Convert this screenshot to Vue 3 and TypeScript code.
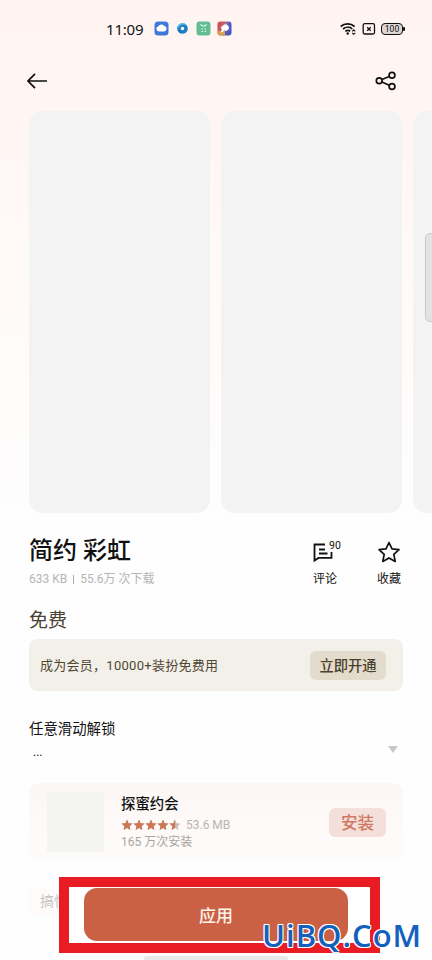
<script setup lang="ts">
const stars: number[] = [1, 1, 1, 1, 0.5]
const starPath = 'M6 .6 7.6 4.2 11.5 4.6 8.6 7.2 9.4 11.1 6 9.1 2.6 11.1 3.4 7.2.5 4.6 4.4 4.2Z'
</script>

<template>
  <div class="screen">
    <header class="status">
      <span class="clock">11:09</span>
      <div class="apps">
        <svg width="15" height="15" viewBox="0 0 15 15"><rect x=".5" y=".5" width="14" height="14" rx="3.5" fill="#3f78db" /><path d="M4.800 10.500a2.700 2.700 0 0 1-.4-5.300 3.500 3.500 0 0 1 5.800-.3 2.900 2.900 0 0 1 .4 5.600Z" fill="#fff" /></svg>
        <svg width="15" height="15" viewBox="0 0 15 15"><circle cx="7.500" cy="7.500" r="5.300" fill="#1c7fc4" /><path d="M3 6.300a5 5 0 0 1 7-3" fill="none" stroke="#52c5ec" stroke-width="1.600" /><circle cx="7.500" cy="7.500" r="1.700" fill="#fff" /></svg>
        <svg width="15" height="15" viewBox="0 0 15 15"><rect x=".5" y=".5" width="14" height="14" rx="3" fill="#62bd93" /><path d="M4.500 3.500 6.500 5h2l2-1.500M5.500 8h1.500M8.500 8H10M5.500 10.500h1.500M8.500 10.500H10" fill="none" stroke="#e5fff1" stroke-width="1.100" /></svg>
        <svg width="15" height="15" viewBox="0 0 15 15"><defs><linearGradient id="tile" x1="0" y1=".3" x2="1" y2=".7"><stop offset="0" stop-color="#d84849" /><stop offset=".45" stop-color="#b96c88" /><stop offset=".65" stop-color="#525dc4" /><stop offset="1" stop-color="#4356c2" /></linearGradient></defs><rect x=".5" y=".5" width="14" height="14" rx="3" fill="url(#tile)" /><path d="M.5 10H8v4.500H3.500a3 3 0 0 1-3-3Z" fill="#d8a150" /><path d="M7.500 4a3 3 0 0 1 3.500 4.500L9 9.500 7.500 9 4.500 11 5.200 8.500 4.500 6Z" fill="#fff" stroke="#fff" stroke-linejoin="round" /></svg>
      </div>
      <div class="signals">
        <svg width="17" height="14" viewBox="0 0 17 14" fill="none" stroke="#111" stroke-width="1.700"><path d="M.7 4.500a10.500 10.500 0 0 1 13.900 0M3 7a7.300 7.300 0 0 1 9.300-.2M5.300 9.300a4 4 0 0 1 4.900-.1" /><circle cx="7.700" cy="11.500" r="1.200" fill="#111" stroke="none" /><path d="m12.200 9.300 1.500-1.500 1.500 1.500m-3 1.500 1.500 1.500 1.500-1.500" stroke-width="1.100" /></svg>
        <svg width="14" height="14" viewBox="0 0 14 14" fill="none" stroke="#111" stroke-width="1.300"><rect x="1.200" y="1.700" width="11.300" height="10.300" rx="1.500" /><path d="m5.200 5.200 3.500 3.500m0-3.500L5.200 8.700" /></svg>
        <div class="battery">100</div>
      </div>
    </header>

    <nav class="nav">
      <svg width="22" height="18" viewBox="0 0 22 18" fill="none" stroke="#111" stroke-width="1.700"><path d="M20 9H1.500M8 1.800 1 9l7 7.200" /></svg>
      <svg width="22" height="20" viewBox="0 0 22 20" fill="none" stroke="#111" stroke-width="1.700"><circle cx="4.200" cy="9.800" r="2.900" /><circle cx="17" cy="4.300" r="2.900" /><circle cx="17" cy="15.500" r="2.900" /><path d="m7 8.500 7.200-3M7 11l7.200 3.200" /></svg>
    </nav>

    <div class="gallery"><div class="shot" /><div class="shot" /><div class="shot" /></div>
    <div class="drawer" />

    <section class="heading">
      <div>
        <h1>简约 彩虹</h1>
        <p class="meta">633 KB<i />55.6万 次下载</p>
      </div>
      <div class="actions">
        <div class="action">
          <svg width="30" height="24" viewBox="0 0 30 24" fill="none" stroke="#111" stroke-width="1.800"><path d="M15 3.500H4.500v16l4-2.600H21.500v-6M9 8.500h6M9 12.500h8.500" /></svg>
          <sup>90</sup><span>评论</span>
        </div>
        <div class="action">
          <svg width="24" height="24" viewBox="0 0 24 24" fill="none" stroke="#111" stroke-width="1.700" stroke-linejoin="round"><path d="m12 1.500 3 6.400 7 .8-5.200 4.700 1.400 7-6.200-3.500-6.200 3.500 1.400-7L2 8.700l7-.8Z" /></svg>
          <span>收藏</span>
        </div>
      </div>
    </section>

    <div class="price">免费</div>
    <section class="member"><span>成为会员，10000+装扮免费用</span><button>立即开通</button></section>

    <section class="description">
      <p>任意滑动解锁</p>
      <div class="more"><span>...</span><i /></div>
    </section>

    <section class="app">
      <div class="thumb" />
      <div class="info">
        <strong>探蜜约会</strong>
        <div class="rating">
          <svg v-for="(fill, i) in stars" :key="i" width="12" height="12" viewBox="0 0 12 12"><path :d="starPath" fill="#cdbbb4" /><path v-if="fill === 1" :d="starPath" fill="#cd7657" /><path v-else d="M6 .6V9.100L2.600 11.100 3.400 7.200.5 4.600 4.400 4.200Z" fill="#cd7657" /></svg>
          <span>53.6 MB</span>
        </div>
        <small>165 万次安装</small>
      </div>
      <button>安装</button>
    </section>
    <div class="tag">搞怪</div>

    <div class="highlight"><button>应用</button></div>
    <div class="home" />
    <div class="watermark">UiBQ.CoM</div>
  </div>
</template>

<style>
body { margin: 0; }
</style>

<style scoped>
.screen { position: relative; box-sizing: border-box; width: 432px; height: 960px; overflow: hidden; background: linear-gradient(#fff4f2 0, #fff5f3 90px, #fffaf8 280px, #fefefe 550px); color: #111; font-family: Roboto, "Noto Sans CJK SC", sans-serif; }
button { display: flex; align-items: center; justify-content: center; padding: 0; border: 0; font-family: inherit; white-space: nowrap; }
p, h1 { margin: 0; }
svg { display: block; flex: none; }
.status { display: flex; align-items: center; box-sizing: border-box; height: 58px; padding: 0 27px 1px 106px; }
.clock { width: 48px; font: 15px/20px "Noto Sans", sans-serif; letter-spacing: -.2px; }
.apps { display: flex; gap: 6px; }
.signals { display: flex; gap: 5px; margin-left: auto; align-items: center; }
.battery { position: relative; box-sizing: border-box; width: 22px; height: 12px; margin-right: 2px; border: 1.500px solid #111; border-radius: 4px; background: #ddd6d4; font: 8.500px/10px Roboto, sans-serif; text-align: center; }
.battery::after { position: absolute; top: 3px; right: -3px; width: 2px; height: 4px; border-radius: 1px; background: #111; content: ""; }
.nav { display: flex; justify-content: space-between; align-items: center; height: 45px; margin-bottom: 8px; padding: 0 35px 0 27px; }
.gallery { display: flex; gap: 11px; margin-left: 29px; height: 402px; }
.shot { flex: 0 0 181px; border-radius: 14px; background: #f3f3f3; }
.drawer { position: absolute; top: 233px; left: 425px; box-sizing: border-box; width: 12px; height: 89px; border: 1px solid #c9c9c9; border-radius: 5px; background: #e3e3e3; }
.heading { display: flex; justify-content: space-between; height: 90px; padding: 20px 28px 0 29px; box-sizing: border-box; }
h1 { font-size: 24px; line-height: 36px; font-weight: 500; letter-spacing: 0; }
.meta { display: flex; align-items: center; color: #b5b5b5; font-size: 12px; line-height: 20px; white-space: nowrap; }
.meta i { width: 1px; height: 9px; margin: 0 6px; background: #aaa; }
.actions { display: flex; gap: 34px; padding-top: 8px; }
.action { position: relative; display: flex; flex-direction: column; align-items: center; width: 30px; }
.action span { margin-top: 5px; font-size: 12px; line-height: 18px; }
.action sup { position: absolute; top: -1px; left: 19px; font-size: 10.500px; line-height: 12px; }
.price { box-sizing: border-box; height: 36px; padding: 2px 0 0 29px; color: #4b4335; font-size: 19px; line-height: 32px; }
.member { display: flex; justify-content: space-between; align-items: center; box-sizing: border-box; width: 374px; height: 52px; margin-left: 29px; padding: 0 17px 0 11px; border-radius: 8px; background: #f3f0e9; color: #504733; font-size: 13px; }
.member span { padding-bottom: 1px; letter-spacing: .27px; }
.member button { width: 76px; height: 29px; padding-bottom: 1px; box-sizing: border-box; border-radius: 6px; background: #e3dccd; color: #4b402b; font-size: 14.300px; font-weight: 500; }
.description { height: 92px; padding: 28px 34px 0 29px; box-sizing: border-box; font-size: 14.400px; line-height: 22px; }
.more { display: flex; justify-content: space-between; padding-left: 4px; font-size: 12px; line-height: 22px; letter-spacing: 0; }
.more i { width: 10px; height: 7px; margin-top: 5px; background: #c8c8c8; clip-path: polygon(0 0, 100% 0, 50% 100%); }
.app { display: flex; align-items: center; box-sizing: border-box; width: 374px; height: 78px; margin-left: 29px; padding: 0 17px 0 18px; border-radius: 10px; background: linear-gradient(#fcf7f5, #fefcfb); }
.thumb { width: 57px; height: 60px; margin-right: 17px; background: #f4f4f3; }
.info { display: flex; flex: 1; flex-direction: column; padding-top: 1px; }
.info strong { font-size: 14.400px; line-height: 22px; font-weight: 500; }
.rating { display: flex; align-items: center; height: 17px; }
.rating span { margin-left: 5px; color: #b8b3b0; font-size: 12px; }
small { color: #aaa5a2; font-size: 12px; line-height: 18px; }
.app button { width: 57px; height: 29px; border-radius: 6px; background: #f5dfda; color: #cf7962; font-size: 16.500px; font-weight: 500; }
.tag { width: 58px; height: 28px; margin: 26px 0 0 29px; padding-left: 11px; background: #fefbfa; color: #c8c5c3; font-size: 14px; line-height: 29px; }
.highlight { position: absolute; top: 877px; left: 59px; box-sizing: border-box; width: 321px; height: 76px; padding: 1px 22px 2px 15px; border: 10px solid #e91b23; background: #fff; }
.highlight button { width: 264px; height: 53px; border-radius: 13px; background: #ca6044; color: #fff5ed; font-size: 17px; font-weight: 500; }
.home { position: absolute; top: 956px; left: 144px; width: 144px; height: 5px; border-radius: 3px 3px 0 0; background: #e9e9e9; }
.watermark { position: absolute; top: 914px; left: 262px; color: #1360bd; font: 600 31px/42px "Open Sans", "Noto Sans", sans-serif; letter-spacing: 1px; text-shadow: -1px -1px #fff, 1px -1px #fff, -1px 1px #fff, 1px 1px #fff; white-space: nowrap; }
</style>
